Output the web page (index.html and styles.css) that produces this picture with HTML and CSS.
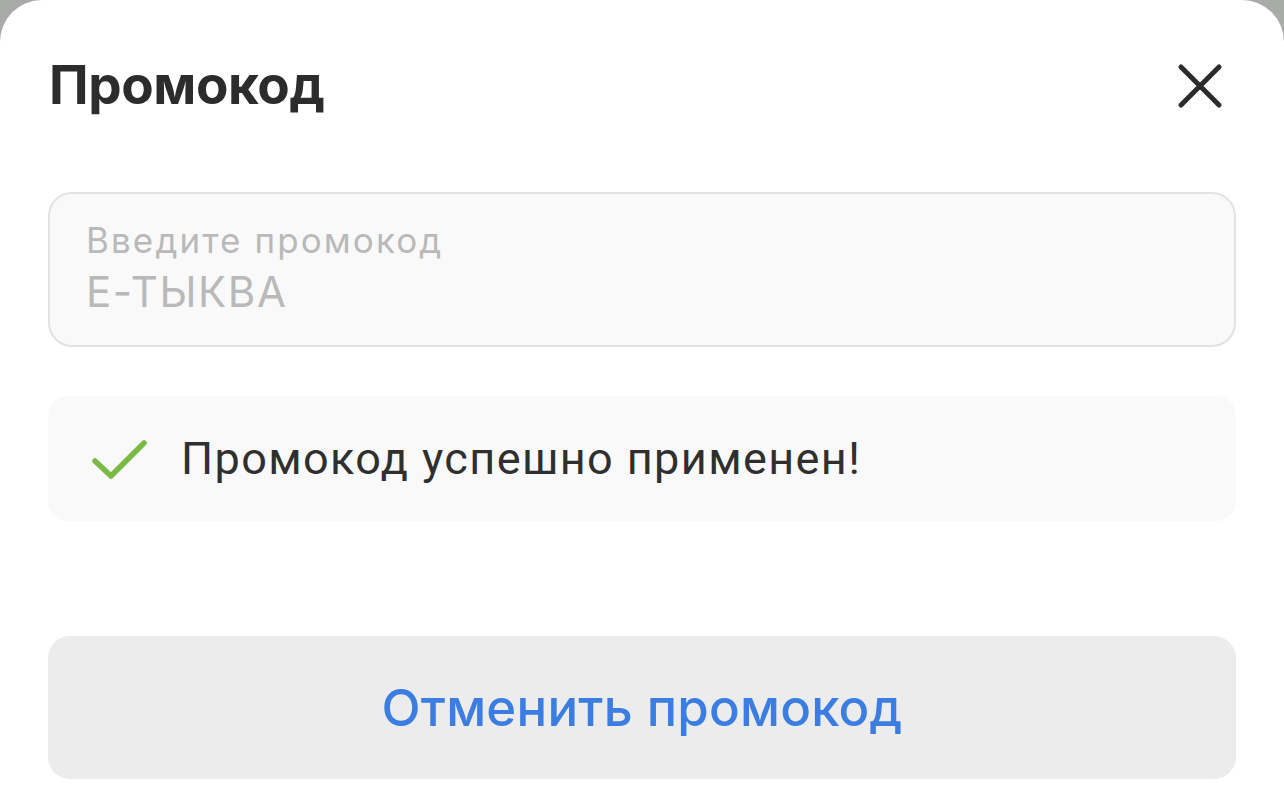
FILE: index.html
```html
<!DOCTYPE html>
<html lang="ru">
<head>
<meta charset="utf-8">
<link rel="stylesheet" href="styles.css">
</head>
<body>
<div class="sheet">
  <header class="head">
    <h1 class="title">Промокод</h1>
    <button class="close" aria-label="Закрыть">
      <svg width="46" height="46" viewBox="0 0 46 46"><path d="M4 4 L42 42 M42 4 L4 42" stroke="#2c2c2c" stroke-width="5" stroke-linecap="round" fill="none"/></svg>
    </button>
  </header>
  <div class="field">
    <div class="label">Введите промокод</div>
    <div class="value">Е-ТЫКВА</div>
  </div>
  <div class="notice">
    <svg class="check" width="58" height="46" viewBox="0 0 58 46"><path d="M5 25 L21 40 L54 7" stroke="#7aba45" stroke-width="5.5" stroke-linecap="round" stroke-linejoin="round" fill="none"/></svg>
    <span class="msg">Промокод успешно применен!</span>
  </div>
  <button class="cancel">Отменить промокод</button>
</div>
</body>
</html>
```
FILE: styles.css
```css
html, body { margin: 0; padding: 0; }
body {
  background: #a9aba9;
  width: 1284px;
  height: 806px;
  overflow: hidden;
  font-family: Inter, "Noto Sans", sans-serif;
}
.sheet {
  background: #ffffff;
  border-radius: 42px 42px 0 0;
  height: 806px;
  padding: 0 48px;
  box-sizing: border-box;
  display: flex;
  flex-direction: column;
}
.head {
  display: flex;
  align-items: center;
  justify-content: space-between;
  height: 170px;
  padding-left: 1px;
}
.title {
  margin: 0;
  font-size: 53px;
  font-weight: 700;
  color: #2c2c2c;
  letter-spacing: -0.4px;
}
.close {
  background: none;
  border: 0;
  padding: 0;
  margin-right: 13px;
  margin-top: 2px;
  width: 46px;
  height: 46px;
}
.close svg { display: block; }
.field {
  margin-top: 22px;
  height: 155px;
  box-sizing: border-box;
  border: 2px solid #e2e2e2;
  border-radius: 24px;
  background: #f9f9f9;
  padding: 25px 36px 0;
}
.label {
  font-size: 35px;
  letter-spacing: 2.1px;
  color: #b9b9b9;
  line-height: 42px;
}
.value {
  font-size: 42px;
  letter-spacing: 1.6px;
  color: #b9b9b9;
  line-height: 50px;
  margin-top: 6px;
}
.notice {
  margin-top: 49px;
  height: 125px;
  border-radius: 20px;
  background: #f9f9f9;
  display: flex;
  align-items: center;
  padding-left: 42px;
}
.check { display: block; margin-right: 33px; }
.msg {
  font-family: Roboto, "Noto Sans", sans-serif;
  font-size: 45px;
  letter-spacing: 1.4px;
  color: #2f2f2f;
}
.cancel {
  margin-top: 115px;
  height: 143px;
  border: 0;
  border-radius: 22px;
  background: #ececec;
  font-family: Inter, "Noto Sans", sans-serif;
  font-size: 51px;
  font-weight: 500;
  letter-spacing: 0.2px;
  color: #3b7de0;
  padding: 0;
}
```
